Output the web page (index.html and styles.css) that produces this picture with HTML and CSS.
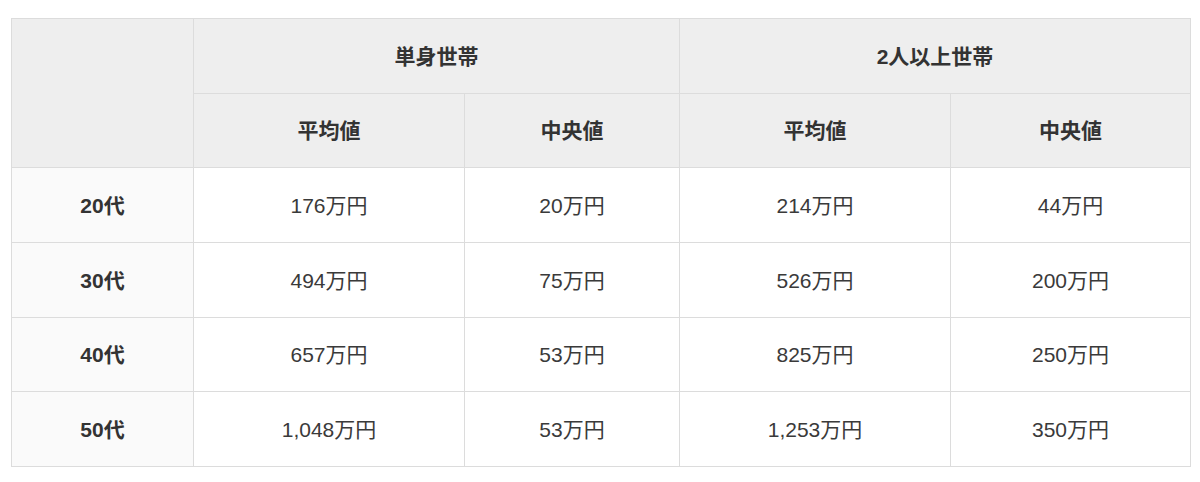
FILE: index.html
```
<!DOCTYPE html>
<html lang="ja">
<head>
<meta charset="utf-8">
<link rel="stylesheet" href="styles.css">
</head>
<body>
<table class="stats">
  <colgroup>
    <col class="c1"><col class="c2"><col class="c3"><col class="c4"><col class="c5">
  </colgroup>
  <thead>
    <tr class="r75">
      <th rowspan="2" class="corner"></th>
      <th colspan="2">単身世帯</th>
      <th colspan="2">2人以上世帯</th>
    </tr>
    <tr class="r74">
      <th>平均値</th><th>中央値</th><th>平均値</th><th>中央値</th>
    </tr>
  </thead>
  <tbody>
    <tr class="r75"><th class="age">20代</th><td>176万円</td><td>20万円</td><td>214万円</td><td>44万円</td></tr>
    <tr class="r75"><th class="age">30代</th><td>494万円</td><td>75万円</td><td>526万円</td><td>200万円</td></tr>
    <tr class="r74"><th class="age">40代</th><td>657万円</td><td>53万円</td><td>825万円</td><td>250万円</td></tr>
    <tr class="r75"><th class="age">50代</th><td>1,048万円</td><td>53万円</td><td>1,253万円</td><td>350万円</td></tr>
  </tbody>
</table>
</body>
</html>
```
FILE: styles.css
```
html, body {
  margin: 0;
  padding: 0;
  background: #fff;
}
body {
  padding: 18px 0 0 11px;
  font-family: "Liberation Sans", "Noto Sans CJK JP", sans-serif;
  color: #333;
}
.stats {
  border-collapse: collapse;
  table-layout: fixed;
  width: 1179px;
  font-size: 21px;
}
.c1 { width: 182px; }
.c2 { width: 271px; }
.c3 { width: 215px; }
.c4 { width: 271px; }
.c5 { width: 240px; }
.stats th, .stats td {
  border: 1px solid #dcdcdc;
  text-align: center;
  vertical-align: middle;
  padding: 0;
  line-height: 1;
}
.stats thead th {
  background: #eeeeee;
  font-weight: 700;
}
.stats th.age {
  background: #fafafa;
  font-weight: 700;
}
.stats td {
  font-weight: 400;
  color: #3a3a3a;
}
.r75 > * { height: 74px; }
.r74 > * { height: 73px; }
```
